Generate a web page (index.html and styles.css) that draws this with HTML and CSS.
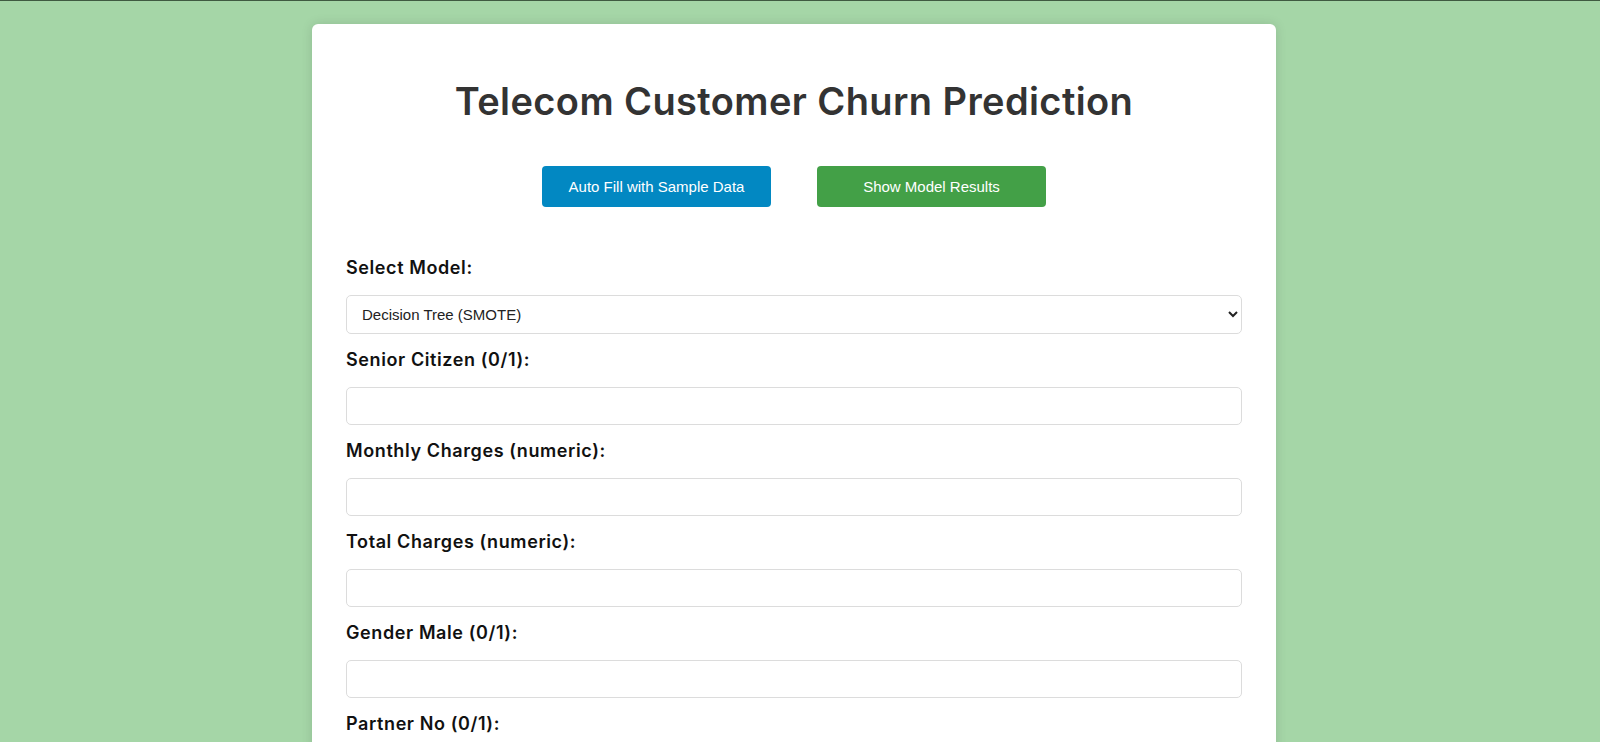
FILE: index.html
```html
<!DOCTYPE html>
<html lang="en">
<head>
<meta charset="utf-8">
<title>Telecom Customer Churn Prediction</title>
<link rel="stylesheet" href="styles.css">
</head>
<body>
<div class="topline"></div>
<main class="page">
  <div class="card">
    <h1 class="title">Telecom Customer Churn Prediction</h1>
    <div class="actions">
      <button class="btn btn-blue" type="button">Auto Fill with Sample Data</button>
      <button class="btn btn-green" type="button">Show Model Results</button>
    </div>
    <form class="form">
      <label class="label" for="model">Select Model:</label>
      <select class="control select" id="model">
        <option>Decision Tree (SMOTE)</option>
        <option>Random Forest (SMOTE)</option>
        <option>Logistic Regression</option>
      </select>
      <label class="label" for="senior">Senior Citizen (0/1):</label>
      <input class="control" id="senior" type="text">
      <label class="label" for="monthly">Monthly Charges (numeric):</label>
      <input class="control" id="monthly" type="text">
      <label class="label" for="total">Total Charges (numeric):</label>
      <input class="control" id="total" type="text">
      <label class="label" for="gender">Gender Male (0/1):</label>
      <input class="control" id="gender" type="text">
      <label class="label" for="partner">Partner No (0/1):</label>
      <input class="control" id="partner" type="text">
      <label class="label" for="dependents">Dependents No (0/1):</label>
      <input class="control" id="dependents" type="text">
    </form>
  </div>
</main>
</body>
</html>
```
FILE: styles.css
```css
html, body {
  margin: 0;
  padding: 0;
}
body {
  background: #a5d6a7;
  font-family: Inter, "Open Sans", sans-serif;
}
.topline {
  height: 1px;
  background: #3f5a41;
}
.page {
  padding: 23px 12px 40px 0;
}
.card {
  width: 964px;
  box-sizing: border-box;
  margin: 0 auto;
  background: #fff;
  border-radius: 6px;
  box-shadow: 0 0 12px rgba(0, 0, 0, 0.12);
  padding: 34px 34px 40px;
}
.title {
  margin: 19px 0 41px;
  font-size: 38px;
  line-height: 48px;
  font-weight: 600;
  color: #333;
  text-align: center;
  letter-spacing: 0.4px;
}
.actions {
  display: flex;
  justify-content: center;
  gap: 46px;
  margin-bottom: 49px;
}
.btn {
  width: 229px;
  height: 41px;
  border: none;
  border-radius: 4px;
  color: #fff;
  font-family: "Liberation Sans", Arial, sans-serif;
  font-size: 15px;
  cursor: pointer;
}
.btn-blue { background: #0288c2; }
.btn-green { background: #43a047; }
.form {
  display: flex;
  flex-direction: column;
}
.label {
  display: block;
  font-size: 18px;
  line-height: 24px;
  font-weight: 600;
  letter-spacing: 0.6px;
  color: #111;
  margin-bottom: 15px;
}
.control {
  box-sizing: border-box;
  width: 100%;
  height: 38px;
  margin: 0 0 14px;
  border: 1px solid #dcdcdc;
  border-radius: 5px;
  background: #fff;
  font-family: "Liberation Sans", Arial, sans-serif;
  font-size: 15px;
  color: #222;
  padding: 0 11px;
}
.select {
  height: 39px;
  margin-bottom: 14px;
}
```
